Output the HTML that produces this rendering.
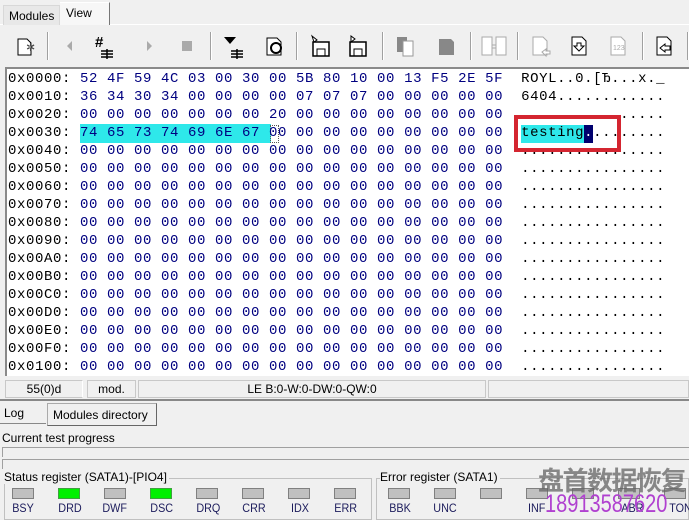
<!DOCTYPE html>
<html><head><meta charset="utf-8"><style>
*{margin:0;padding:0;box-sizing:border-box}
body{width:689px;height:519px;background:#f0f0f0;position:relative;overflow:hidden;font-family:"Liberation Sans",sans-serif;font-size:12px;color:#000}
.a{position:absolute}
.hex{position:absolute;left:5px;top:67px;width:684px;height:309px;background:#fff;border-top:2px solid #8a8a8a;border-left:2px solid #8a8a8a;overflow:hidden}
.row{position:absolute;left:1px;height:18px;line-height:18px;font-family:"Liberation Mono",monospace;font-size:14px;letter-spacing:0.6px;white-space:pre}
.h{color:#000080}
.sep{position:absolute;top:32px;width:2px;height:28px;border-left:1px solid #a0a0a0;border-right:1px solid #fff}
.led{position:absolute;width:22px;height:11px;background:#c0c0c0;border:1px solid #808080}
.g{background:#00f000;border-color:#40a040}
.lb{position:absolute;font-size:12px;color:#1c1c5c;transform:scaleX(.9)}
.ic{position:absolute;top:34px}
</style></head><body>
<div class="a" style="left:0;top:24px;width:689px;height:1px;background:#fff"></div>
<div class="a" style="left:3px;top:5px;width:57px;height:20px;background:#e8e8e8;border:1px solid #d8d8d8;border-bottom:none;font-size:12px;padding:3px 0 0 5px">Modules</div>
<div class="a" style="left:60px;top:2px;width:50px;height:23px;background:#f7f7f7;border-top:1px solid #fff;border-right:1px solid #777;padding:3px 0 0 6px;font-size:12px">View</div>
<div class="sep" style="left:47px"></div><div class="sep" style="left:210px"></div><div class="sep" style="left:296px"></div><div class="sep" style="left:382px"></div><div class="sep" style="left:470px"></div><div class="sep" style="left:517px"></div><div class="sep" style="left:642px"></div><div class="sep" style="left:687px"></div>
<svg class="ic" style="left:15px" width="24" height="24"><path d="M3 5h9l4 4v12H3z" fill="#fff" stroke="#000"/><text x="11" y="17" font-size="11" fill="#444">✲</text></svg>
<svg class="ic" style="left:64px" width="12" height="24"><path d="M8 7l-5 5 5 5z" fill="#aaa"/></svg>
<svg class="ic" style="left:94px" width="24" height="26"><text x="1" y="13" font-size="15" font-weight="bold" font-family="Liberation Sans">#</text><path d="M7 17h12M7 20h12M7 23h12M13 15v10" stroke="#000" stroke-width="1.5"/></svg>
<svg class="ic" style="left:143px" width="12" height="24"><path d="M4 7l5 5-5 5z" fill="#aaa"/></svg>
<svg class="ic" style="left:181px" width="12" height="24"><rect x="1" y="7" width="10" height="10" fill="#aaa"/></svg>
<svg class="ic" style="left:222px" width="26" height="26"><path d="M2 3h12l-6 7z" fill="#000"/><path d="M9 17h12M9 20h12M9 23h12M15 15v10" stroke="#000" stroke-width="1.5"/></svg>
<svg class="ic" style="left:264px" width="24" height="24"><path d="M3 4h10l4 4v13H3z" fill="#fff" stroke="#000"/><circle cx="12" cy="14" r="5" fill="none" stroke="#000" stroke-width="2"/></svg>
<svg class="ic" style="left:309px" width="24" height="24"><path d="M4 8h16v14H4z" fill="#fff" stroke="#000" stroke-width="1.5"/><path d="M8 15h8v7H8z" fill="none" stroke="#000"/><path d="M3 2l5 4-3 2z" fill="#fff" stroke="#000"/></svg>
<svg class="ic" style="left:346px" width="24" height="24"><path d="M4 8h16v14H4z" fill="#fff" stroke="#000" stroke-width="1.5"/><path d="M8 15h8v7H8z" fill="none" stroke="#000"/><path d="M5 2v6l4-3z" fill="#fff" stroke="#000"/></svg>
<svg class="ic" style="left:395px" width="24" height="24"><path d="M2 3h10v15H2z" fill="#888"/><path d="M8 7h10v15H8z" fill="#fff" stroke="#999"/></svg>
<svg class="ic" style="left:436px" width="22" height="24"><path d="M3 5h12l3 3v13H3z" fill="#888"/></svg>
<svg class="ic" style="left:480px" width="28" height="24"><rect x="2" y="3" width="10" height="18" fill="#fff" stroke="#aaa"/><rect x="16" y="3" width="10" height="18" fill="#fff" stroke="#aaa"/><path d="M12 11h4M12 14h4" stroke="#aaa"/></svg>
<svg class="ic" style="left:530px" width="24" height="26"><path d="M3 3h10l4 4v14H3z" fill="#fff" stroke="#aaa"/><path d="M12 18l4-3v2h4v3h-4v2z" fill="#fff" stroke="#aaa"/></svg>
<svg class="ic" style="left:569px" width="22" height="24"><path d="M3 3h10l4 4v14H3z" fill="#fff" stroke="#000"/><path d="M8 9h4v3h3l-5 5-5-5h3z" fill="none" stroke="#000"/></svg>
<svg class="ic" style="left:608px" width="22" height="24"><path d="M3 3h10l4 4v14H3z" fill="#fff" stroke="#aaa"/><text x="5" y="16" font-size="7" fill="#aaa">123</text></svg>
<svg class="ic" style="left:654px" width="24" height="26"><path d="M3 3h10l4 4v14H3z" fill="#fff" stroke="#000"/><path d="M6 14l5-4v2h5v4h-5v2z" fill="#fff" stroke="#000"/></svg>
<div class="hex">
<div class="a" style="left:73px;top:55px;width:191px;height:19px;background:#2ee8ea"></div>
<div class="a" style="left:263px;top:56px;width:9px;height:18px;border:1px dotted #555"></div>
<div class="a" style="left:514px;top:56px;width:63px;height:18px;background:#2ee8ea"></div>
<div class="a" style="left:577px;top:56px;width:9px;height:18px;background:#00006e"></div>
<div class="row" style="top:1px">0x0000: <span class="h">52 4F 59 4C 03 00 30 00 5B 80 10 00 13 F5 2E 5F</span>  ROYL..0.[Ђ...x._</div>
<div class="row" style="top:19px">0x0010: <span class="h">36 34 30 34 00 00 00 00 07 07 07 00 00 00 00 00</span>  6404............</div>
<div class="row" style="top:37px">0x0020: <span class="h">00 00 00 00 00 00 00 20 00 00 00 00 00 00 00 00</span>  ................</div>
<div class="row" style="top:55px">0x0030: <span class="h">74 65 73 74 69 6E 67 00 00 00 00 00 00 00 00 00</span>  testing<span style="color:#fff">.</span>........</div>
<div class="row" style="top:73px">0x0040: <span class="h">00 00 00 00 00 00 00 00 00 00 00 00 00 00 00 00</span>  ................</div>
<div class="row" style="top:91px">0x0050: <span class="h">00 00 00 00 00 00 00 00 00 00 00 00 00 00 00 00</span>  ................</div>
<div class="row" style="top:109px">0x0060: <span class="h">00 00 00 00 00 00 00 00 00 00 00 00 00 00 00 00</span>  ................</div>
<div class="row" style="top:127px">0x0070: <span class="h">00 00 00 00 00 00 00 00 00 00 00 00 00 00 00 00</span>  ................</div>
<div class="row" style="top:145px">0x0080: <span class="h">00 00 00 00 00 00 00 00 00 00 00 00 00 00 00 00</span>  ................</div>
<div class="row" style="top:163px">0x0090: <span class="h">00 00 00 00 00 00 00 00 00 00 00 00 00 00 00 00</span>  ................</div>
<div class="row" style="top:181px">0x00A0: <span class="h">00 00 00 00 00 00 00 00 00 00 00 00 00 00 00 00</span>  ................</div>
<div class="row" style="top:199px">0x00B0: <span class="h">00 00 00 00 00 00 00 00 00 00 00 00 00 00 00 00</span>  ................</div>
<div class="row" style="top:217px">0x00C0: <span class="h">00 00 00 00 00 00 00 00 00 00 00 00 00 00 00 00</span>  ................</div>
<div class="row" style="top:235px">0x00D0: <span class="h">00 00 00 00 00 00 00 00 00 00 00 00 00 00 00 00</span>  ................</div>
<div class="row" style="top:253px">0x00E0: <span class="h">00 00 00 00 00 00 00 00 00 00 00 00 00 00 00 00</span>  ................</div>
<div class="row" style="top:271px">0x00F0: <span class="h">00 00 00 00 00 00 00 00 00 00 00 00 00 00 00 00</span>  ................</div>
<div class="row" style="top:289px">0x0100: <span class="h">00 00 00 00 00 00 00 00 00 00 00 00 00 00 00 00</span>  ................</div>
<div class="a" style="left:507px;top:46px;width:107px;height:37px;border:4px solid #d42530"></div>
</div>
<div class="a" style="left:5px;top:380px;width:78px;height:18px;border:1px solid #c8c8c8;border-right-color:#fff;text-align:center;line-height:17px">55(0)d</div>
<div class="a" style="left:87px;top:380px;width:49px;height:18px;border:1px solid #c8c8c8;text-align:center;line-height:17px">mod.</div>
<div class="a" style="left:138px;top:380px;width:348px;height:18px;border:1px solid #c8c8c8;text-align:center;line-height:17px">LE B:0-W:0-DW:0-QW:0</div>
<div class="a" style="left:488px;top:380px;width:201px;height:18px;border:1px solid #c8c8c8"></div>
<div class="a" style="left:0;top:399px;width:689px;height:2px;background:#888"></div>
<div class="a" style="left:0;top:403px;width:46px;height:21px;border-bottom:1px solid #888;padding:3px 0 0 4px">Log</div>
<div class="a" style="left:47px;top:403px;width:110px;height:23px;background:#f0f0f0;border:1px solid #aaa;border-right:1px solid #666;border-bottom:1px solid #666;padding:4px 0 0 5px">Modules directory</div>
<div class="a" style="left:2px;top:431px">Current test progress</div>
<div class="a" style="left:2px;top:447px;width:687px;height:10px;border-top:1px solid #a0a0a0;border-left:1px solid #a0a0a0"></div>
<div class="a" style="left:2px;top:459px;width:687px;height:10px;border-top:1px solid #a0a0a0;border-left:1px solid #a0a0a0"></div>
<div class="a" style="left:4px;top:478px;width:368px;height:42px;border:1px solid #c0c0c0"></div>
<div class="a" style="left:4px;top:470px;background:#f0f0f0;padding-right:2px">Status register (SATA1)-[PIO4]</div>
<div class="a" style="left:376px;top:478px;width:313px;height:42px;border:1px solid #c0c0c0"></div>
<div class="a" style="left:380px;top:470px;background:#f0f0f0;padding-right:2px">Error register (SATA1)</div>
<div class="led" style="left:12px;top:488px"></div><div class="led g" style="left:58px;top:488px"></div><div class="led" style="left:104px;top:488px"></div><div class="led g" style="left:150px;top:488px"></div><div class="led" style="left:196px;top:488px"></div><div class="led" style="left:242px;top:488px"></div><div class="led" style="left:288px;top:488px"></div><div class="led" style="left:334px;top:488px"></div>
<div class="led" style="left:388px;top:488px"></div><div class="led" style="left:434px;top:488px"></div><div class="led" style="left:480px;top:488px"></div><div class="led" style="left:526px;top:488px"></div><div class="led" style="left:572px;top:488px"></div><div class="led" style="left:618px;top:488px"></div><div class="led" style="left:664px;top:488px"></div>
<div class="lb" style="left:11px;top:501px">BSY</div><div class="lb" style="left:57px;top:501px">DRD</div><div class="lb" style="left:101px;top:501px">DWF</div><div class="lb" style="left:149px;top:501px">DSC</div><div class="lb" style="left:195px;top:501px">DRQ</div><div class="lb" style="left:241px;top:501px">CRR</div><div class="lb" style="left:290px;top:501px">IDX</div><div class="lb" style="left:333px;top:501px">ERR</div>
<div class="lb" style="left:388px;top:501px">BBK</div><div class="lb" style="left:432px;top:501px">UNC</div><div class="lb" style="left:527px;top:501px">INF</div><div class="lb" style="left:620px;top:501px">ABR</div><div class="lb" style="left:668px;top:501px">TON</div>
<div class="a" style="left:538px;top:461px;font-family:'Noto Sans CJK SC',sans-serif;font-size:26px;font-weight:bold;color:rgba(100,100,100,.75);letter-spacing:-1.5px;white-space:nowrap">盘首数据恢复</div>
<div class="a" style="left:545px;top:490px;font-family:'Liberation Sans',sans-serif;font-size:25px;color:#b040d0;white-space:nowrap;transform:scaleX(.8);transform-origin:left">18913587620</div>
</body></html>
